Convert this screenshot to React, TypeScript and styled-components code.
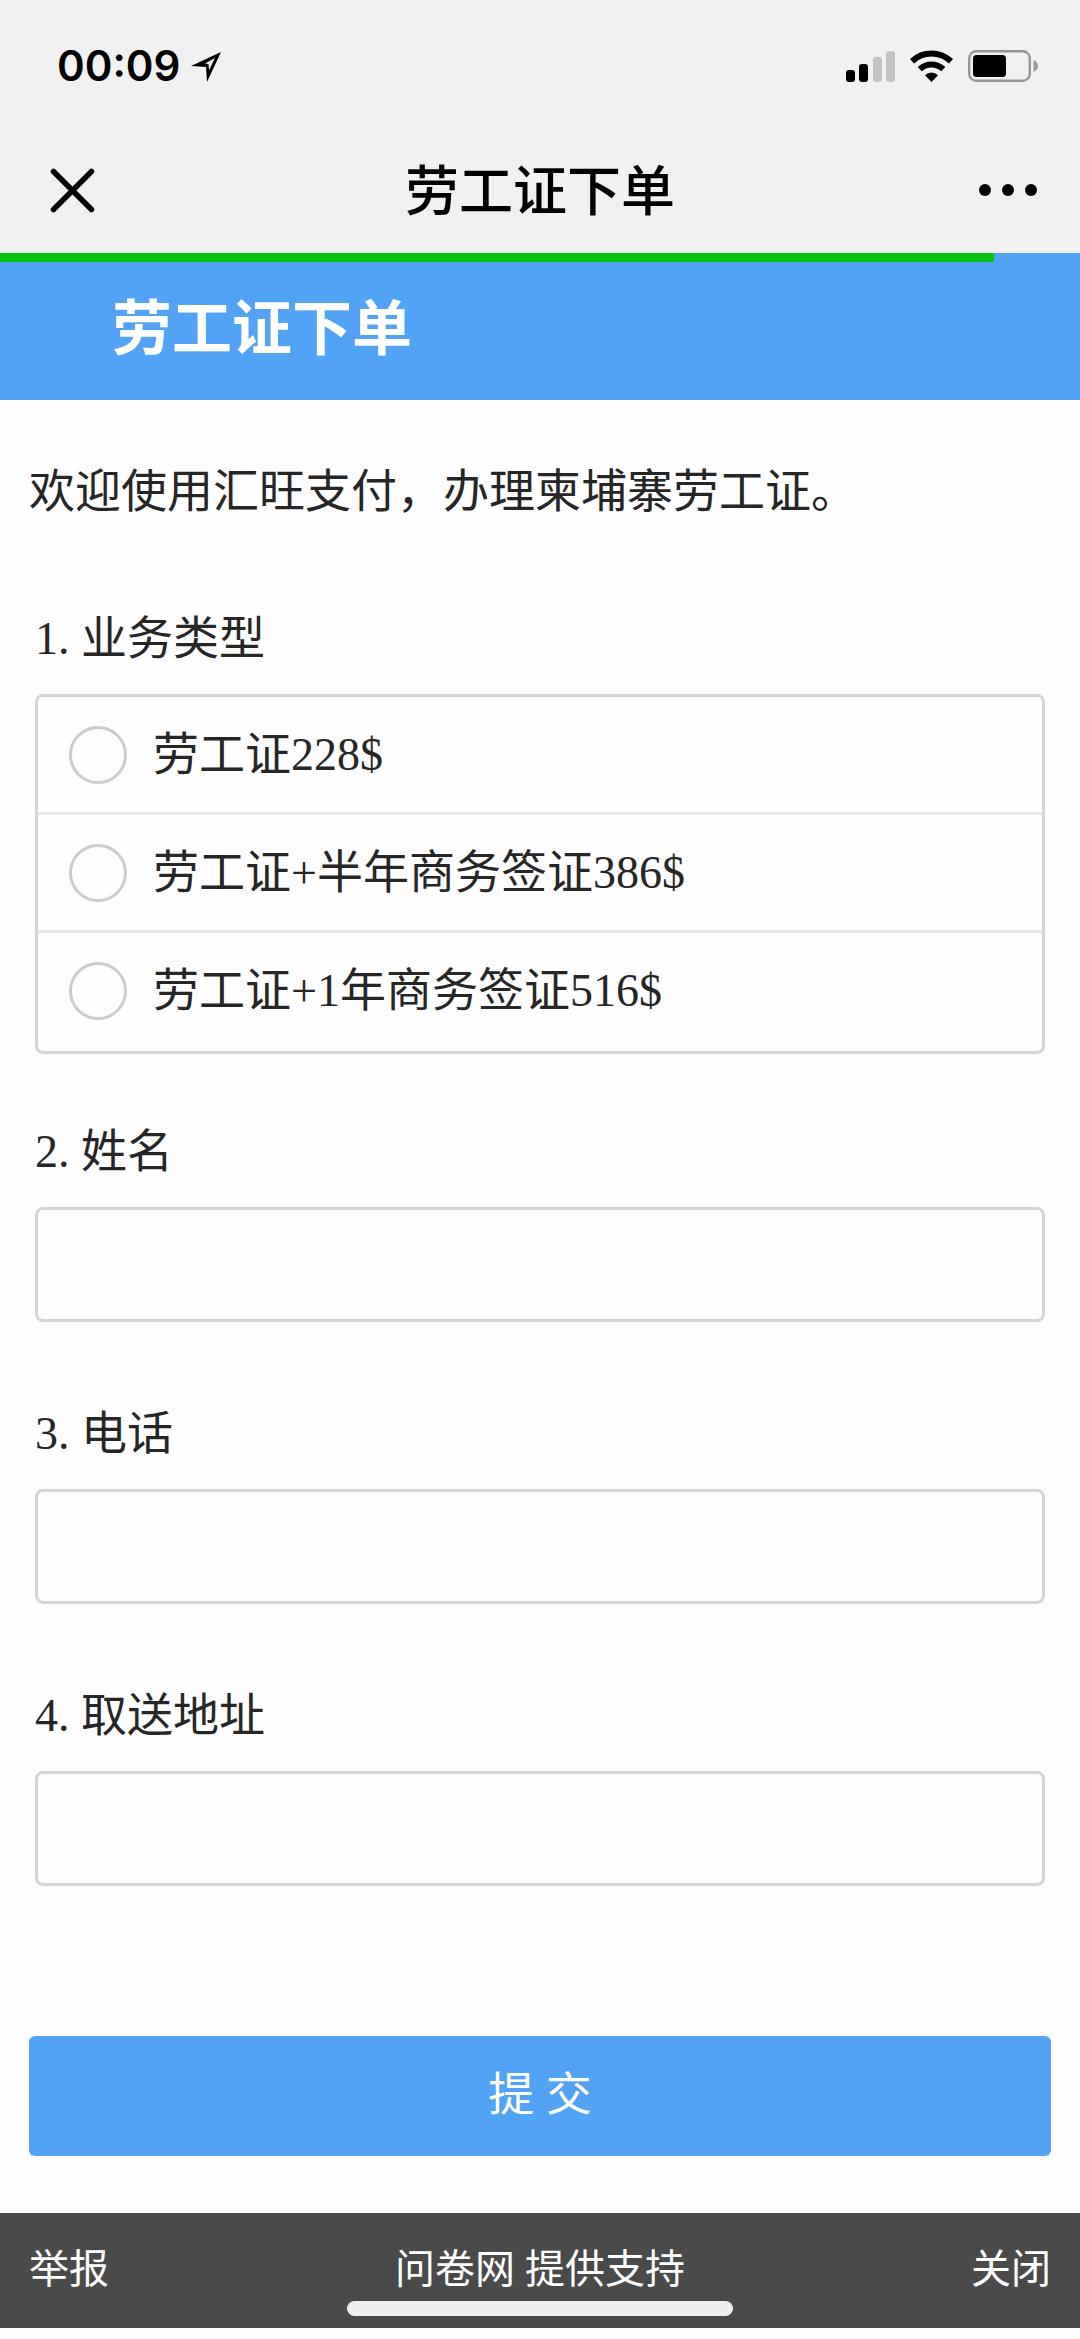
import React, { useState } from "react";
import styled, { createGlobalStyle } from "styled-components";

const sans = `"Liberation Sans", "Noto Sans CJK SC", sans-serif`;
const serif = `"Liberation Serif", "Noto Sans CJK SC", serif`;
const blue = "#52a3f5";

const GlobalStyle = createGlobalStyle`
  *, *::before, *::after { box-sizing: border-box; }
  body {
    margin: 0;
    background: #fefefe;
    color: #262626;
    font-family: ${serif};
    font-size: 46px;
    line-height: 60px;
  }
  h1, h2, p { margin: 0; font-weight: 400; }
  button, input { font: inherit; color: inherit; }
`;

const TopArea = styled.header`
  padding-bottom: 5px;
  background: #f1f1f1;
  color: #000;
  font-family: ${sans};
`;

const StatusBar = styled.div`
  display: flex;
  align-items: center;
  justify-content: space-between;
  height: 132px;
  padding: 0 42px 0 57px;
`;

const StatusGroup = styled.div<{ $gap: number }>`
  display: flex;
  align-items: center;
  gap: ${(p) => p.$gap}px;
  svg { display: block; }
`;

const Clock = styled.span`
  font-family: Inter, sans-serif;
  font-size: 42px;
  font-weight: 600;
`;

const NavBar = styled.nav`
  display: grid;
  grid-template-columns: 1fr auto 1fr;
  align-items: center;
  height: 116px;
  padding: 0 40px;
`;

const NavTitle = styled.h1`
  padding-top: 4px;
  font-size: 54px;
  font-weight: 500;
`;

const IconButton = styled.button<{ $end?: boolean }>`
  justify-self: ${(p) => (p.$end ? "end" : "start")};
  padding: ${(p) => (p.$end ? "0" : "0 0 0 10px")};
  border: 0;
  background: none;
  svg { display: block; }
`;

const Banner = styled.section`
  position: relative;
  display: flex;
  align-items: center;
  height: 147px;
  padding: 6px 112px 0;
  background: ${blue};
`;

const Progress = styled.div<{ $value: number }>`
  position: absolute;
  top: 0;
  left: 0;
  width: ${(p) => p.$value}%;
  height: 9px;
  background: #04c112;
`;

const BannerTitle = styled.h2`
  color: #fff;
  font-family: ${sans};
  font-size: 60px;
  font-weight: 700;
`;

const Form = styled.form`
  padding: 62px 29px 57px;
`;

const Intro = styled.p`
  margin-bottom: 87px;
`;

const Questions = styled.div`
  padding: 0 6px;
`;

const ChoiceField = styled.fieldset`
  min-width: 0;
  margin: 0 0 68px;
  padding: 0;
  border: 0;
`;

const Legend = styled.legend`
  margin-bottom: 25px;
  padding: 0;
`;

const Options = styled.div`
  border: 3px solid #d5d5d5;
  border-radius: 8px;
`;

const Option = styled.label`
  display: flex;
  align-items: center;
  gap: 26px;
  height: 118px;
  padding: 0 31px;
  border-bottom: 3px solid #e8e8e8;
  &:last-child { border-bottom-color: transparent; }
`;

const Radio = styled.input`
  appearance: none;
  flex: none;
  width: 58px;
  height: 58px;
  margin: 0;
  border: 3px solid #ccc;
  border-radius: 50%;
  &:checked { border: 16px solid ${blue}; }
`;

const TextField = styled.div`
  margin-bottom: 82px;
`;

const FieldLabel = styled.label`
  display: block;
  margin-bottom: 25px;
`;

const TextInput = styled.input`
  display: block;
  width: 100%;
  height: 115px;
  padding: 0 24px;
  border: 3px solid #d5d5d5;
  border-radius: 8px;
  background: #fefefe;
  outline: none;
  &:focus { border-color: ${blue}; }
`;

const Submit = styled.button`
  display: block;
  width: 100%;
  height: 120px;
  margin-top: 150px;
  padding: 0 0 2px;
  border: 0;
  border-radius: 6px;
  background: ${blue};
  color: #fff;
`;

const Footer = styled.footer`
  position: relative;
  display: flex;
  align-items: center;
  justify-content: space-between;
  height: 115px;
  padding: 0 29px 2px;
  background: #4a4a4a;
  color: #fff;
  font-size: 40px;
`;

const FooterLink = styled.a`
  color: inherit;
  text-decoration: none;
`;

const FooterButton = styled.button`
  padding: 0;
  border: 0;
  background: none;
`;

const HomeIndicator = styled.div`
  position: absolute;
  bottom: 12px;
  left: 50%;
  width: 386px;
  height: 15px;
  border-radius: 8px;
  background: #eee;
  transform: translateX(-50%);
`;

const LocationIcon = () => (
  <svg width="30" height="32" viewBox="0 0 30 32" aria-hidden="true">
    <path fillRule="evenodd" d="M30 2 L16 32 L15 17 L0 16 Z M24 8 L14 13.500 L17.500 14 L18 20 Z" />
  </svg>
);

const SignalIcon = () => (
  <svg width="50" height="32" viewBox="0 0 50 32" aria-hidden="true">
    <rect x="0" y="20" width="9" height="12" rx="3" />
    <rect x="13" y="14" width="9" height="18" rx="3" />
    <rect x="27" y="7" width="9" height="25" rx="3" fill="#c2c2c2" />
    <rect x="40" y="1" width="9" height="31" rx="3" fill="#c2c2c2" />
  </svg>
);

const WifiIcon = () => (
  <svg width="44" height="32" viewBox="0 0 44 32" aria-hidden="true">
    <g fill="none" stroke="#000" strokeWidth="6">
      <path d="M2 11.2 A28.5 28.5 0 0 1 41 11.2" />
      <path d="M9.700 19.2 A17 17 0 0 1 33.3 19.2" />
    </g>
    <path d="M21.5 32 L15 25.3 A9.2 9.2 0 0 1 28 25.3 Z" />
  </svg>
);

const BatteryIcon = () => (
  <svg width="70" height="32" viewBox="0 0 70 32" aria-hidden="true">
    <rect x="1.2" y="1.2" width="60.6" height="29.6" rx="7" fill="none" stroke="#969696" strokeWidth="2.4" />
    <rect x="5" y="5" width="33" height="22" rx="3.5" />
    <path d="M65.5 10 Q70 12.500 70 16 Q70 19.500 65.500 22 Z" fill="#969696" />
  </svg>
);

const CloseIcon = () => (
  <svg width="45" height="45" viewBox="0 0 45 45" aria-hidden="true">
    <path d="M3.500 3.500 L41.500 41.500 M41.500 3.500 L3.500 41.500" fill="none" stroke="#000" strokeWidth="5.5" strokeLinecap="round" />
  </svg>
);

const MoreIcon = () => (
  <svg width="61" height="12" viewBox="0 0 61 12" aria-hidden="true">
    <circle cx="6" cy="6" r="6" />
    <circle cx="29" cy="6" r="6" />
    <circle cx="52" cy="6" r="6" />
  </svg>
);

const services = ["劳工证228$", "劳工证+半年商务签证386$", "劳工证+1年商务签证516$"];

const textFields = [
  { id: "name", label: "2. 姓名", type: "text" },
  { id: "phone", label: "3. 电话", type: "tel" },
  { id: "address", label: "4. 取送地址", type: "text" },
];

export default function App() {
  const [service, setService] = useState<number | null>(null);

  return (
    <>
      <GlobalStyle />
      <TopArea>
        <StatusBar>
          <StatusGroup $gap={11}>
            <Clock>00:09</Clock>
            <LocationIcon />
          </StatusGroup>
          <StatusGroup $gap={14}>
            <SignalIcon />
            <WifiIcon />
            <BatteryIcon />
          </StatusGroup>
        </StatusBar>
        <NavBar>
          <IconButton type="button" aria-label="关闭"><CloseIcon /></IconButton>
          <NavTitle>劳工证下单</NavTitle>
          <IconButton type="button" aria-label="更多" $end><MoreIcon /></IconButton>
        </NavBar>
      </TopArea>
      <Banner>
        <Progress $value={92} />
        <BannerTitle>劳工证下单</BannerTitle>
      </Banner>
      <Form onSubmit={(e) => e.preventDefault()}>
        <Intro>欢迎使用汇旺支付，办理柬埔寨劳工证。</Intro>
        <Questions>
          <ChoiceField>
            <Legend>1. 业务类型</Legend>
            <Options>
              {services.map((text, i) => (
                <Option key={text}>
                  <Radio type="radio" name="service" checked={service === i} onChange={() => setService(i)} />
                  {text}
                </Option>
              ))}
            </Options>
          </ChoiceField>
          {textFields.map((f) => (
            <TextField key={f.id}>
              <FieldLabel htmlFor={f.id}>{f.label}</FieldLabel>
              <TextInput id={f.id} name={f.id} type={f.type} />
            </TextField>
          ))}
        </Questions>
        <Submit type="submit">提 交</Submit>
      </Form>
      <Footer>
        <FooterLink href="#report">举报</FooterLink>
        <FooterLink href="#support">问卷网 提供支持</FooterLink>
        <FooterButton type="button">关闭</FooterButton>
        <HomeIndicator />
      </Footer>
    </>
  );
}
